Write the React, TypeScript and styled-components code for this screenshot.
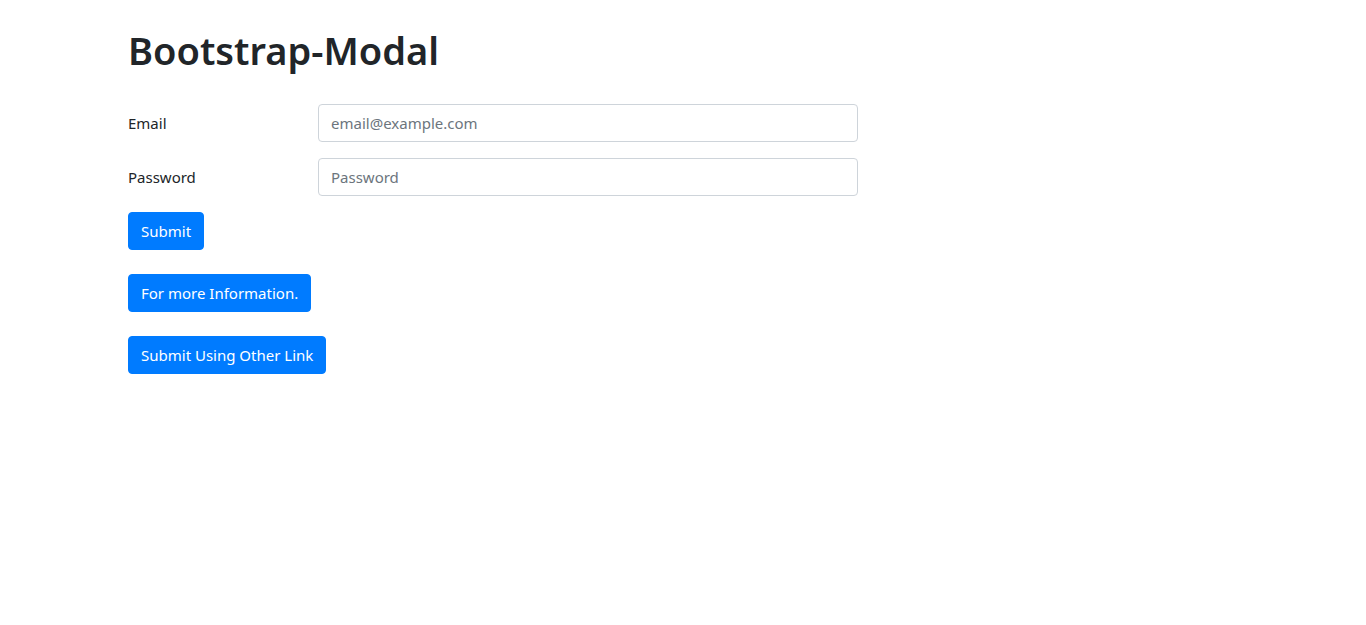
import React from "react";
import styled, { createGlobalStyle } from "styled-components";

const GlobalStyle = createGlobalStyle`
  *, *::before, *::after { box-sizing: border-box; }
  body {
    margin: 0;
    background: #fff;
    color: #212529;
    font-family: "Noto Sans", "Open Sans", sans-serif;
    font-size: 16px;
    line-height: 1.5;
  }
`;

// Bootstrap-like container, 1140px wide on large screens
const Container = styled.div`
  width: 100%;
  max-width: 1140px;
  margin: 0 auto;
  padding: 26px 15px 0;
`;

const Title = styled.h1`
  margin: 0 0 30px;
  font-size: 38px;
  font-weight: 600;
  line-height: 48px;
  color: #212529;
`;

const FormRow = styled.div`
  display: flex;
  margin: 0 -15px 16px;
`;

const LabelCol = styled.label`
  flex: 0 0 190px;
  padding: 7px 15px;
  font-size: 15px;
  line-height: 24px;
  color: #212529;
`;

const InputCol = styled.div`
  flex: 0 0 570px;
  padding: 0 15px;
`;

const Input = styled.input`
  display: block;
  width: 100%;
  height: 38px;
  padding: 6px 12px;
  font-family: inherit;
  font-size: 15px;
  line-height: 24px;
  color: #495057;
  background: #fff;
  border: 1px solid #ced4da;
  border-radius: 4px;
  outline: none;

  &::placeholder {
    color: #6c757d;
    opacity: 1;
  }
`;

const Button = styled.button<{ gap?: number }>`
  display: block;
  height: 38px;
  margin-bottom: ${(props) => props.gap ?? 24}px;
  padding: 6px 12px;
  font-family: inherit;
  font-size: 15px;
  line-height: 24px;
  color: #fff;
  background: #007bff;
  border: 1px solid #007bff;
  border-radius: 4px;
  cursor: pointer;
`;

export default function App() {
  return (
    <>
      <GlobalStyle />
      <Container>
        <Title>Bootstrap-Modal</Title>
        <form onSubmit={(e) => e.preventDefault()}>
          <FormRow>
            <LabelCol htmlFor="email">Email</LabelCol>
            <InputCol>
              <Input id="email" type="email" placeholder="email@example.com" />
            </InputCol>
          </FormRow>
          <FormRow>
            <LabelCol htmlFor="password">Password</LabelCol>
            <InputCol>
              <Input id="password" type="password" placeholder="Password" />
            </InputCol>
          </FormRow>
          <Button type="submit">Submit</Button>
        </form>
        <Button type="button">For more Information.</Button>
        <Button type="button">Submit Using Other Link</Button>
      </Container>
    </>
  );
}
